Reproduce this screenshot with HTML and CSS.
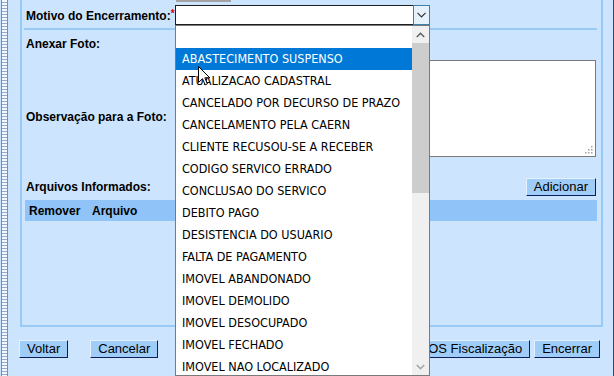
FILE: index.html
```html
<!DOCTYPE html>
<html lang="pt-BR">
<head>
<meta charset="utf-8">
<title>Encerrar OS</title>
<link rel="stylesheet" href="styles.css">
</head>
<body>
<div class="screen">
  <div class="rail"></div>
  <div class="main">
    <div class="panel">
      <div class="stub"></div>
      <div class="row row-motivo">
        <span class="lbl">Motivo do Encerramento:<span class="req">*</span></span>
        <div class="select">
          <span class="select-arrow">
            <svg width="9" height="6" viewBox="0 0 9 6"><path d="M0.5 0.8 L4.5 4.8 L8.5 0.8" fill="none" stroke="#333" stroke-width="1.2"/></svg>
          </span>
        </div>
      </div>
      <div class="sep"></div>
      <div class="row row-anexo">
        <span class="lbl">Anexar Foto:</span>
        <div class="file"><span class="file-btn">Escolher arquivo</span><span class="file-name">Nenhum arquivo escolhido</span></div>
      </div>
      <div class="row row-obs">
        <span class="lbl lbl-obs">Observação para a Foto:</span>
        <div class="textarea">
          <svg class="grip" width="9" height="9" viewBox="0 0 9 9">
            <rect x="7" y="1" width="1.5" height="1.5" fill="#a0a0a0"/>
            <rect x="4" y="4" width="1.5" height="1.5" fill="#a0a0a0"/>
            <rect x="7" y="4" width="1.5" height="1.5" fill="#a0a0a0"/>
            <rect x="1" y="7" width="1.5" height="1.5" fill="#a0a0a0"/>
            <rect x="4" y="7" width="1.5" height="1.5" fill="#a0a0a0"/>
            <rect x="7" y="7" width="1.5" height="1.5" fill="#a0a0a0"/>
          </svg>
        </div>
      </div>
      <div class="row row-arq">
        <span class="lbl">Arquivos Informados:</span>
        <button class="btn" type="button">Adicionar</button>
      </div>
      <div class="thead">
        <span class="th th-rem">Remover</span>
        <span class="th">Arquivo</span>
      </div>
    </div>
    <div class="actions">
      <div class="actions-left">
        <button class="btn" type="button">Voltar</button>
        <button class="btn" type="button">Cancelar</button>
      </div>
      <div class="actions-right">
        <button class="btn" type="button">Gerar OS Fiscalização</button>
        <button class="btn" type="button">Encerrar</button>
      </div>
    </div>
  </div>

  <div class="dropdown">
    <ul class="options">
      <li class="opt"></li>
      <li class="opt opt-active">ABASTECIMENTO SUSPENSO</li>
      <li class="opt">ATUALIZACAO CADASTRAL</li>
      <li class="opt">CANCELADO POR DECURSO DE PRAZO</li>
      <li class="opt">CANCELAMENTO PELA CAERN</li>
      <li class="opt">CLIENTE RECUSOU-SE A RECEBER</li>
      <li class="opt">CODIGO SERVICO ERRADO</li>
      <li class="opt">CONCLUSAO DO SERVICO</li>
      <li class="opt">DEBITO PAGO</li>
      <li class="opt">DESISTENCIA DO USUARIO</li>
      <li class="opt">FALTA DE PAGAMENTO</li>
      <li class="opt">IMOVEL ABANDONADO</li>
      <li class="opt">IMOVEL DEMOLIDO</li>
      <li class="opt">IMOVEL DESOCUPADO</li>
      <li class="opt">IMOVEL FECHADO</li>
      <li class="opt">IMOVEL NAO LOCALIZADO</li>
    </ul>
    <div class="scrollbar">
      <span class="sb-btn">
        <svg width="9" height="6" viewBox="0 0 9 6"><path d="M0.8 5 L4.5 1.3 L8.2 5" fill="none" stroke="#606060" stroke-width="1.5"/></svg>
      </span>
      <span class="sb-thumb"></span>
      <span class="sb-track"></span>
      <span class="sb-btn">
        <svg width="9" height="6" viewBox="0 0 9 6"><path d="M0.8 1 L4.5 4.7 L8.2 1" fill="none" stroke="#a3a3a3" stroke-width="1.5"/></svg>
      </span>
    </div>
  </div>

  <svg class="cursor" width="13" height="20" viewBox="0 0 13 20">
    <path d="M0.5 0.5 L0.5 16.5 L4.5 12.7 L7.2 18.8 L9.4 17.8 L6.8 11.8 L11.8 11.8 Z" fill="#fff" stroke="#000" stroke-width="1"/>
  </svg>
</div>
</body>
</html>
```

FILE: styles.css
```css
* { box-sizing: border-box; }

html, body {
  margin: 0;
  padding: 0;
}

body {
  background: #cce4fd;
  font-family: "Liberation Sans", Arial, sans-serif;
  font-size: 12px;
  color: #000;
}

.screen {
  position: relative;
  width: 614px;
  height: 376px;
  overflow: hidden;
  display: flex;
}

.rail {
  width: 7px;
  margin-left: 1px;
  border-left: 1px solid #6f90bf;
  border-right: 1px solid #6f90bf;
  background: repeating-linear-gradient(to bottom, #f4f8fd 0 2px, #8fabd3 2px 3px);
}

.main {
  flex: 1;
  display: flex;
  flex-direction: column;
  border-right: 1px solid #2c4c6e;
}

.panel {
  margin-left: 12px;
  width: 583px;
  height: 327px;
  border: 2px solid #99c9f5;
  border-top: 0;
  display: flex;
  flex-direction: column;
}

.stub {
  margin-left: 154px;
  width: 55px;
  height: 2px;
  background: #a3a3a3;
}

.row {
  display: flex;
  align-items: center;
}

.lbl {
  width: 153px;
  padding-left: 4px;
  font-weight: bold;
  font-size: 12px;
  line-height: 14px;
  white-space: nowrap;
}

.req {
  color: #d00000;
  font-size: 10px;
  vertical-align: 3px;
}

.row-motivo {
  margin-top: 3px;
  height: 20px;
}

.select {
  position: relative;
  width: 255px;
  height: 20px;
  background: #fff;
  border: 1px solid #1e1e1e;
}

.select-arrow {
  position: absolute;
  top: -1px;
  right: -1px;
  width: 17px;
  height: 20px;
  background: #e5f1fb;
  border: 1px solid #3c7fb1;
  display: flex;
  align-items: center;
  justify-content: center;
}

.sep {
  margin: 3px 4px 0 2px;
  height: 2px;
  background: #99c9f5;
}

.row-anexo {
  height: 28px;
}

.file {
  display: flex;
  align-items: center;
  gap: 4px;
  font-size: 12px;
}

.file-btn {
  border: 1px solid #888;
  background: #eee;
  padding: 1px 5px;
}

.row-obs {
  margin-top: 2px;
  align-items: flex-start;
}

.lbl-obs {
  margin-top: 50px;
}

.textarea {
  position: relative;
  width: 421px;
  height: 97px;
  background: #fff;
  border: 1px solid #7a7a7a;
}

.grip {
  position: absolute;
  right: 2px;
  bottom: 2px;
}

.row-arq {
  margin-top: 21px;
  height: 18px;
  padding-right: 5px;
  justify-content: space-between;
}

.btn {
  height: 18px;
  padding: 0 7px;
  margin: 0;
  font-family: "Liberation Sans", Arial, sans-serif;
  font-size: 13px;
  line-height: 16px;
  color: #000;
  background: #9fcdf8;
  border: 1px solid;
  border-color: #e4f1fe #0b1f5c #0b1f5c #e4f1fe;
  white-space: nowrap;
}

.thead {
  margin: 4px 4px 0 3px;
  height: 21px;
  background: #90c3f7;
  display: flex;
  align-items: center;
}

.th {
  font-weight: bold;
  font-size: 12px;
  padding-left: 4px;
}

.th-rem {
  width: 63px;
}

.actions {
  margin-top: 13px;
  padding: 0 13px 0 11px;
  display: flex;
  justify-content: space-between;
}

.actions-left {
  display: flex;
  gap: 22px;
}

.actions-right {
  display: flex;
  gap: 4px;
}

/* open dropdown overlay */
.dropdown {
  position: absolute;
  left: 175px;
  top: 25px;
  width: 255px;
  height: 351px;
  background: #fff;
  border: 1px solid #7a7a7a;
  display: flex;
}

.options {
  list-style: none;
  margin: 0;
  padding: 0;
  width: 236px;
  overflow: hidden;
}

.opt {
  height: 22px;
  line-height: 22px;
  padding-left: 6px;
  font-family: "DejaVu Sans Condensed", "DejaVu Sans", sans-serif;
  font-stretch: semi-condensed;
  font-size: 12.5px;
  color: #000;
  white-space: nowrap;
}

.opt-active {
  background: #0078d7;
  color: #fff;
}

.scrollbar {
  width: 17px;
  background: #f0f0f0;
  display: flex;
  flex-direction: column;
}

.sb-btn {
  height: 17px;
  display: flex;
  align-items: center;
  justify-content: center;
}

.sb-thumb {
  height: 150px;
  background: #cdcdcd;
}

.sb-track {
  flex: 1;
}

.cursor {
  position: absolute;
  left: 198px;
  top: 66px;
}
```
